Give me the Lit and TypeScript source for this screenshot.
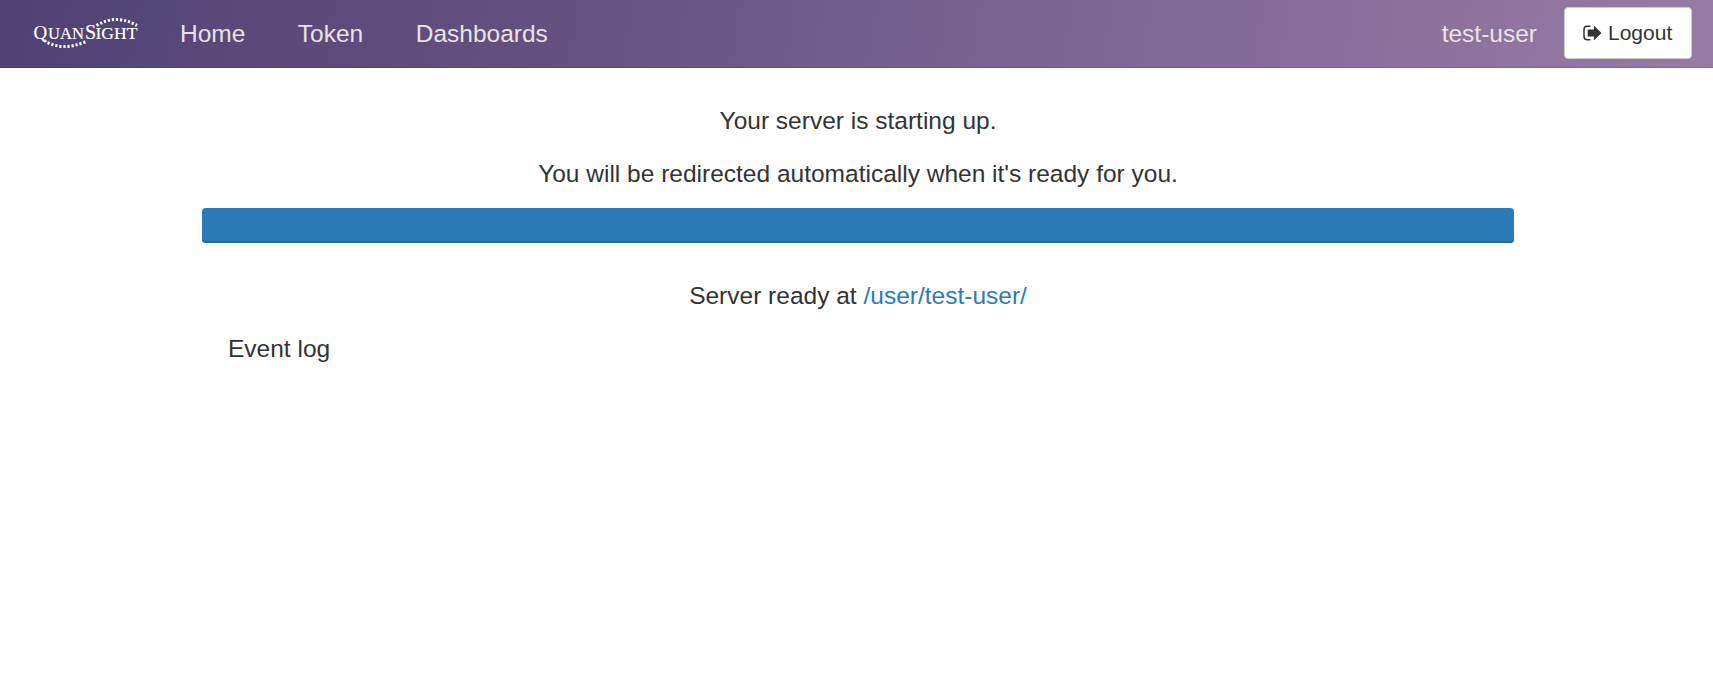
import { LitElement, html, css } from "lit";
import { customElement } from "lit/decorators.js";

@customElement("app-root")
export class AppRoot extends LitElement {
  static styles = css`
    :host { display: block; min-height: 100vh; background: #fff; color: #333; font: 24.5px/34px "Liberation Sans", Arial, sans-serif; }
    * { box-sizing: border-box; }
    nav { height: 68px; display: flex; align-items: center; background: linear-gradient(100deg, #4f4173 0%, #54477a 10%, #5a4878 12%, #65517f 33%, #74608c 52%, #8b709c 81%, #967ba5 100%); border-bottom: 1px solid rgba(40, 20, 60, .16); padding: 0 21px 0 33px; }
    a { text-decoration: none; color: #2b7bb7; }
    .logo { display: block; width: 106px; height: 34px; }
    .links { display: flex; gap: 52.5px; margin-left: 41px; flex: 1; }
    .links a, .user { color: #e7e3e6; }
    .user { margin-right: 27px; }
    .logout { display: flex; align-items: center; width: 128px; height: 52px; padding: 0 18px; gap: 6px; font-size: 21px; color: #333; background: #fff; border: 1px solid #ccc; border-radius: 4px; margin-bottom: 2px; }
    .logout svg { width: 19px; height: 16px; flex: none; }
    main { width: 1312px; margin: 36px auto 0 202px; }
    p { margin: 0 0 19px; text-align: center; }
    .bar { height: 35px; border-radius: 4px; background: #2b7bb7; box-shadow: inset 0 -2px 0 #256a9e; margin: -2px 0 36px; }
    .log { padding-left: 26px; }
  `;

  render() {
    return html`
      <nav>
        <a class="logo" href="#" aria-label="Quansight">
          <svg width="106" height="34" viewBox="0 0 106 34" fill="#fff">
            <text y="22.3" font-family="Liberation Serif, serif" stroke="#fff" stroke-width=".15"><tspan x="0.5" font-size="19">Q</tspan><tspan x="15" font-size="16" textLength="36" lengthAdjust="spacingAndGlyphs">UAN</tspan><tspan x="52" font-size="20">S</tspan><tspan x="62.5" font-size="16.5" textLength="42" lengthAdjust="spacingAndGlyphs">IGHT</tspan></text>
            <g fill="none" stroke="#fff" stroke-width="3" stroke-dasharray="2.2 1.9">
              <path d="M63.5 8.5Q83-3.5 104 8.5" />
              <path d="M11 23.5Q29 35 53 24.5" />
            </g>
          </svg>
        </a>
        <div class="links"><a href="#">Home</a><a href="#">Token</a><a href="#">Dashboards</a></div>
        <span class="user">test-user</span>
        <a class="logout" href="#">
          <svg viewBox="0 0 19 16"><path d="M7.5 1.2H4.2Q1 1.2 1 4.4v7.2q0 3.2 3.2 3.2h3.3" fill="none" stroke="#333" stroke-width="1.5" /><path d="M4.7 4.6h6.2V.6l7.6 7.4-7.6 7.4v-4H4.7z" fill="#333" /></svg>
          <span>Logout</span>
        </a>
      </nav>
      <main>
        <p>Your server is starting up.</p>
        <p>You will be redirected automatically when it's ready for you.</p>
        <div class="bar"></div>
        <p>Server ready at <a href="#">/user/test-user/</a></p>
        <div class="log">Event log</div>
      </main>
    `;
  }
}
